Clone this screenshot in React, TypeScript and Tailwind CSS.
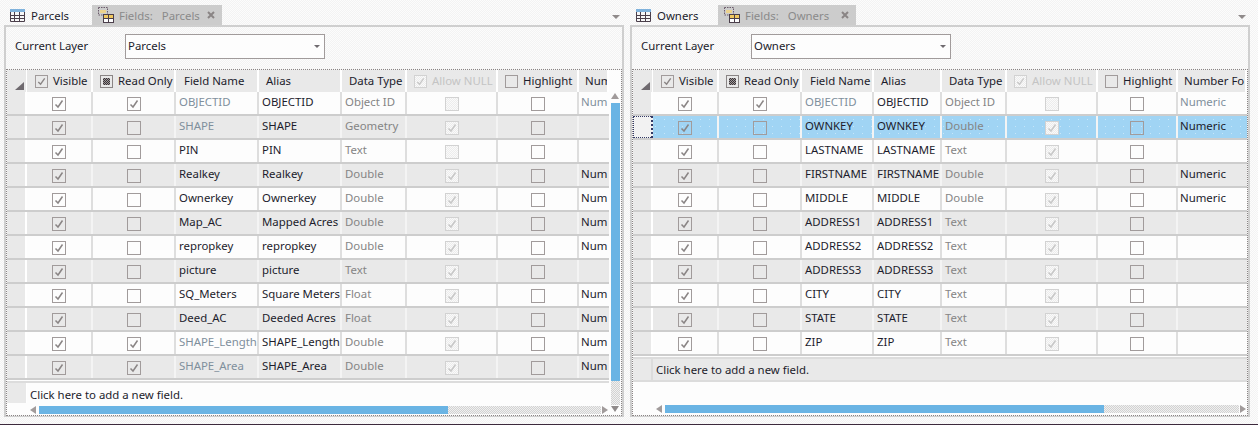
type Cell = { name: string; alias: string; type: string; sys?: boolean; readOnly?: boolean; nullState: 'off' | 'on'; num?: string; numDim?: boolean; selected?: boolean };

const parcels: Cell[] = [
  { name: 'OBJECTID', alias: 'OBJECTID', type: 'Object ID', sys: true, readOnly: true, nullState: 'off', num: 'Num', numDim: true },
  { name: 'SHAPE', alias: 'SHAPE', type: 'Geometry', sys: true, nullState: 'on' },
  { name: 'PIN', alias: 'PIN', type: 'Text', nullState: 'off' },
  { name: 'Realkey', alias: 'Realkey', type: 'Double', nullState: 'on', num: 'Num' },
  { name: 'Ownerkey', alias: 'Ownerkey', type: 'Double', nullState: 'on', num: 'Num' },
  { name: 'Map_AC', alias: 'Mapped Acres', type: 'Double', nullState: 'on', num: 'Num' },
  { name: 'repropkey', alias: 'repropkey', type: 'Double', nullState: 'on', num: 'Num' },
  { name: 'picture', alias: 'picture', type: 'Text', nullState: 'on' },
  { name: 'SQ_Meters', alias: 'Square Meters', type: 'Float', nullState: 'on', num: 'Num' },
  { name: 'Deed_AC', alias: 'Deeded Acres', type: 'Float', nullState: 'on', num: 'Num' },
  { name: 'SHAPE_Length', alias: 'SHAPE_Length', type: 'Double', sys: true, readOnly: true, nullState: 'on', num: 'Num' },
  { name: 'SHAPE_Area', alias: 'SHAPE_Area', type: 'Double', sys: true, readOnly: true, nullState: 'on', num: 'Num' },
];

const owners: Cell[] = [
  { name: 'OBJECTID', alias: 'OBJECTID', type: 'Object ID', sys: true, readOnly: true, nullState: 'off', num: 'Numeric', numDim: true },
  { name: 'OWNKEY', alias: 'OWNKEY', type: 'Double', nullState: 'on', num: 'Numeric', selected: true },
  { name: 'LASTNAME', alias: 'LASTNAME', type: 'Text', nullState: 'on' },
  { name: 'FIRSTNAME', alias: 'FIRSTNAME', type: 'Double', nullState: 'on', num: 'Numeric' },
  { name: 'MIDDLE', alias: 'MIDDLE', type: 'Double', nullState: 'on', num: 'Numeric' },
  { name: 'ADDRESS1', alias: 'ADDRESS1', type: 'Text', nullState: 'on' },
  { name: 'ADDRESS2', alias: 'ADDRESS2', type: 'Text', nullState: 'on' },
  { name: 'ADDRESS3', alias: 'ADDRESS3', type: 'Text', nullState: 'on' },
  { name: 'CITY', alias: 'CITY', type: 'Text', nullState: 'on' },
  { name: 'STATE', alias: 'STATE', type: 'Text', nullState: 'on' },
  { name: 'ZIP', alias: 'ZIP', type: 'Text', nullState: 'on' },
];

const thumbFill = 'bg-[radial-gradient(#8fc8ee_0.6px,#6ab4e4_0.6px)] bg-[length:4px_4px]';
const trackFill = 'bg-[repeating-conic-gradient(#d2d2d2_0_25%,#f0f0f0_0_50%)] bg-[length:2px_2px]';

const Check = ({ color }: { color: string }) => (
  <svg viewBox="0 0 12 12" className="w-full h-full">
    <path d="M2.5 6.5 L5 9 L9.5 2.5" fill="none" stroke={color} strokeWidth="1.5" />
  </svg>
);

const Box = ({ checked, size = 'w-[14px] h-[14px]' }: { checked?: boolean; size?: string }) => (
  <div className={`${size} border border-[#a19b9b] shrink-0`}>{checked && <Check color="#8a8585" />}</div>
);

const DisabledBox = ({ checked, size = 'w-[14px] h-[14px]' }: { checked?: boolean; size?: string }) => (
  <div className={`${size} border border-[#d2d2d2] shrink-0 bg-[repeating-conic-gradient(#ececec_0_25%,#fafafa_0_50%)] bg-[length:2px_2px]`}>
    {checked && <Check color="#c8c8c8" />}
  </div>
);

const TableIcon = () => (
  <svg viewBox="0 0 15 13" className="w-[15px] h-[13px] shrink-0">
    <rect x="0" y="0" width="15" height="3" fill="#7fb2dc" />
    <path d="M0.5 3V12.5H14.5V3M0.5 6.5H14.5M0.5 9.5H14.5M4.5 3V12.5M9.5 3V12.5" fill="none" stroke="#4b3f4b" strokeWidth="1" />
  </svg>
);

const FieldsIcon = () => (
  <svg viewBox="0 0 16 16" className="w-4 h-4 shrink-0">
    <path d="M0.5 0.5H9.5V7M0.5 0.5V8H5" fill="none" stroke="#6b5b6b" strokeWidth="1" strokeDasharray="1.5 1" />
    <rect x="2" y="3" width="6" height="3" fill="#ecd28c" />
    <rect x="5.5" y="7.5" width="10" height="8" fill="#fdfdfd" stroke="#4b3f4b" />
    <rect x="6" y="8" width="9" height="3" fill="#f0c860" />
    <path d="M5.5 11.5H15.5M10.5 7.5V15.5" stroke="#4b3f4b" strokeWidth="1" />
  </svg>
);

const HeaderCell = ({ className = '', children }: { className?: string; children: React.ReactNode }) => (
  <div className={`flex items-center gap-[5px] bg-[#e9e9e9] border-r-2 border-white whitespace-nowrap overflow-hidden ${className}`}>{children}</div>
);

const GridTable = ({ rows, cols, numLabel, vertical, thumb }: { rows: Cell[]; cols: string; numLabel: string; vertical?: boolean; thumb: string }) => (
  <div className="flex flex-1 min-h-0 border border-dotted border-[#8b8585]">
    <div className="flex flex-col flex-1 min-w-0 bg-[#fdfdfd]">
      <div className={`grid h-[22px] shrink-0 ${cols}`}>
        <div className="flex items-end justify-end pr-[2px] pb-[2px] bg-[#e9e9e9] border-r border-white">
          <div className="w-0 h-0 border-l-[9px] border-l-transparent border-b-[8px] border-b-[#6f6a6f]" />
        </div>
        <HeaderCell className="pl-2">
          <Box checked size="w-[13px] h-[13px]" />
          Visible
        </HeaderCell>
        <HeaderCell className="pl-[7px]">
          <div className="w-[13px] h-[13px] border border-[#8a8585] p-[2px] shrink-0">
            <div className="w-full h-full bg-[repeating-conic-gradient(#3a3438_0_25%,#a09a9a_0_50%)] bg-[length:2px_2px]" />
          </div>
          Read Only
        </HeaderCell>
        <HeaderCell className="pl-2">Field Name</HeaderCell>
        <HeaderCell className="pl-[7px]">Alias</HeaderCell>
        <HeaderCell className="pl-[7px]">Data Type</HeaderCell>
        <HeaderCell className="pl-[7px] text-[#c4c4c4]">
          <DisabledBox checked size="w-[13px] h-[13px]" />
          Allow NULL
        </HeaderCell>
        <HeaderCell className="pl-[7px]">
          <Box size="w-[13px] h-[13px]" />
          Highlight
        </HeaderCell>
        <HeaderCell className="pl-[6px] border-r-0">{numLabel}</HeaderCell>
      </div>

      {rows.map((row, i) => {
        const bg = row.selected
          ? 'bg-[radial-gradient(#c6e6f9_0.6px,#a0d4f4_0.6px)] bg-[length:9px_7px]'
          : i % 2 === 0
            ? 'bg-[#fdfdfd]'
            : 'bg-[#e9e9e9]';
        const line = i % 2 === 0 && !row.selected ? 'border-[#dedede]' : 'border-[#f4f4f4]';
        const cell = `flex items-center border-r-2 ${line} whitespace-nowrap overflow-hidden`;
        const text = `${cell} pl-[3px] pb-[3px]`;
        const center = `${cell} justify-center pt-[1px]`;
        return (
          <div key={row.name} className={`grid h-6 shrink-0 border-b-2 border-[#cdcdcd] ${cols} ${bg}`}>
            <div className={`border-r-2 ${row.selected ? 'border border-dotted border-[#333a66] bg-[#f2f2f2]' : 'bg-[#e9e9e9] border-white'}`} />
            <div className={center}><Box checked /></div>
            <div className={center}><Box checked={row.readOnly} /></div>
            <div className={`${text} ${row.sys ? 'text-[#7f8f9c]' : ''}`}>{row.name}</div>
            <div className={text}>{row.alias}</div>
            <div className={`${text} text-[#858585]`}>{row.type}</div>
            <div className={center}><DisabledBox checked={row.nullState === 'on'} /></div>
            <div className={center}><Box /></div>
            <div className={`flex items-center pl-[2px] pb-[3px] whitespace-nowrap overflow-hidden ${row.numDim ? 'text-[#7f8f9c]' : ''}`}>{row.num}</div>
          </div>
        );
      })}

      <div className={`grid h-[25px] mt-[1px] shrink-0 border-t-2 border-[#dcdcdc] grid-cols-[20px_1fr] ${vertical ? '' : 'bg-[#e9e9e9] border-b-2'}`}>
        <div className={vertical ? 'bg-[#e9e9e9] border-r border-white mb-[3px]' : 'border-r-2 border-[#dcdcdc]'} />
        <div className="flex items-center pl-[3px] pt-[1px]">Click here to add a new field.</div>
      </div>

      <div className="flex items-center h-2 mt-auto mb-[2px] ml-[23px] mr-[1px] shrink-0">
        <div className="w-0 h-0 border-y-[4px] border-y-transparent border-r-[6px] border-r-[#a19b9b] mr-[3px]" />
        <div className={`h-2 ${thumb} ${thumbFill}`} />
        <div className={`flex-1 h-2 ${trackFill}`} />
        <div className="w-0 h-0 border-y-[4px] border-y-transparent border-l-[6px] border-l-[#a19b9b] ml-[1px]" />
      </div>
    </div>

    {vertical && (
      <div className="flex flex-col items-center w-3 shrink-0 bg-[#fdfdfd] pt-[23px] pb-[3px]">
        <div className="w-0 h-0 border-x-[4px] border-x-transparent border-b-[6px] border-b-[#a19b9b]" />
        <div className={`w-[9px] h-[278px] mt-[4px] ${thumbFill}`} />
        <div className={`w-[9px] flex-1 ${trackFill}`} />
        <div className="w-0 h-0 border-x-[4px] border-x-transparent border-t-[6px] border-t-[#8f8a8a] mt-[1px]" />
      </div>
    )}
  </div>
);

const Pane = ({ title, tabWidth, rows, cols, numLabel, vertical, thumb }: { title: string; tabWidth: string; rows: Cell[]; cols: string; numLabel: string; vertical?: boolean; thumb: string }) => (
  <div className="flex flex-col w-[620px] h-[417px] shrink-0">
    <div className="flex items-end h-[25px] shrink-0">
      <div className="flex items-center gap-[6px] w-[88px] h-5 pl-[6px]">
        <TableIcon />
        <span className="pt-[2px]">{title}</span>
      </div>
      <div className={`flex items-center h-5 pl-[6px] bg-[#cccccc] text-[#8a8a8a] ${tabWidth}`}>
        <FieldsIcon />
        <span className="ml-[5px] pt-[2px]">Fields:</span>
        <span className="ml-[9px] pt-[2px]">{title}</span>
        <svg viewBox="0 0 8 8" className="w-2 h-2 ml-auto mr-[7px]">
          <path d="M1 1L7 7M7 1L1 7" stroke="#8a8585" strokeWidth="2" />
        </svg>
      </div>
      <div className="flex justify-end flex-1 pb-[6px] pr-1">
        <div className="w-0 h-0 border-x-[4px] border-x-transparent border-t-[4px] border-t-[#8f8a8a]" />
      </div>
    </div>
    <div className="flex flex-col flex-1 min-h-0 border-2 border-[#cfcfcf] border-b-[1px]">
      <div className="flex items-center h-[42px] shrink-0 pl-[9px] pb-[4px]">
        <span className="w-[110px]">Current Layer</span>
        <div className="flex items-center justify-between w-[200px] h-[25px] pl-[2px] pr-[4px] bg-[#fdfdfd] border border-[#a19b9b]">
          <span>{title}</span>
          <div className="w-0 h-0 border-x-[3px] border-x-transparent border-t-[3px] border-t-[#6f6a6f]" />
        </div>
      </div>
      <GridTable rows={rows} cols={cols} numLabel={numLabel} vertical={vertical} thumb={thumb} />
    </div>
  </div>
);

export default function App() {
  return (
    <div className="flex flex-col h-[425px] overflow-hidden bg-[repeating-conic-gradient(#f3f3f3_0_25%,#fcfcfc_0_50%)] bg-[length:2px_2px] text-[#1c1c2c] text-[11.4px] font-['Noto_Sans',sans-serif]">
      <div className="flex flex-1 gap-[6px] pl-1">
        <Pane
          title="Parcels"
          tabWidth="w-[130px]"
          rows={parcels}
          cols="grid-cols-[20px_66px_83px_83px_83px_65px_91px_81px_30px]"
          numLabel="Num"
          vertical
          thumb="w-[409px]"
        />
        <Pane
          title="Owners"
          tabWidth="w-[138px]"
          rows={owners}
          cols="grid-cols-[20px_66px_83px_72px_68px_65px_91px_80px_69px]"
          numLabel="Number Fo"
          thumb="w-[439px]"
        />
      </div>
      <div className="h-px shrink-0 bg-[#3d2a3d]" />
    </div>
  );
}
